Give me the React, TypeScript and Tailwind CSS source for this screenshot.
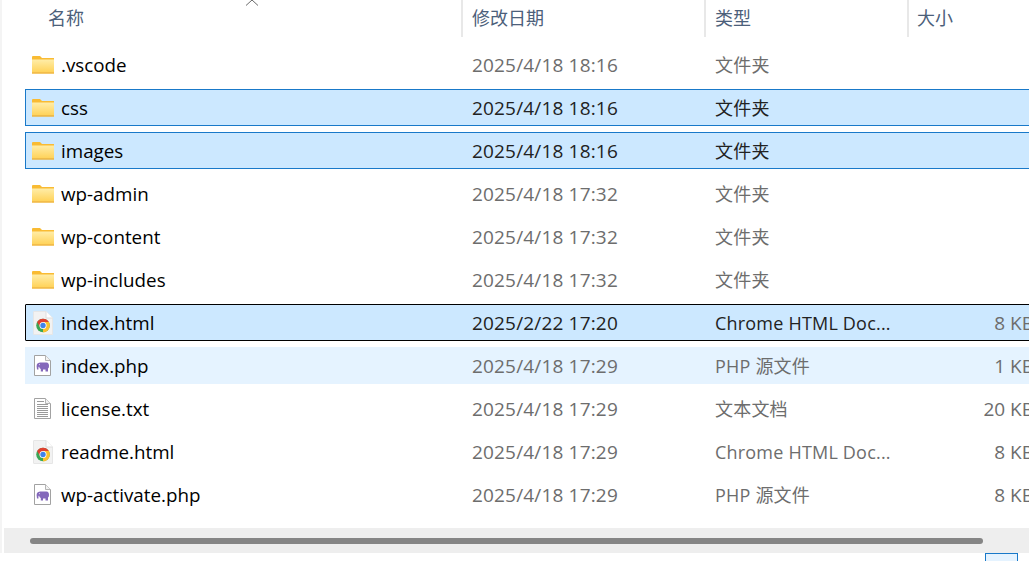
import React from "react";

const CJK = "font-['Open_Sans','Noto_Sans_CJK_SC',sans-serif]";

function Folder() {
  return (
    <svg width="22" height="18" viewBox="0 0 22 18" className="shrink-0">
      <defs>
        <linearGradient id="fg" x1="0" y1="0" x2="0" y2="1">
          <stop offset="0" stopColor="#ffeda8" />
          <stop offset="1" stopColor="#ffd258" />
        </linearGradient>
      </defs>
      <path d="M0 1 Q0 0 1 0 H8 L10 2 H22 V5 H0 Z" fill="#f9bb33" />
      <rect x="0" y="3.5" width="22" height="13" fill="url(#fg)" />
      <rect x="0" y="16.2" width="22" height="1.5" fill="#f0b232" />
    </svg>
  );
}

function DocShape() {
  return (
    <>
      <path d="M.5 .5 H11.5 L16.5 5.5 V20.5 H.5 Z" fill="#fff" stroke="#a2a2a2" />
      <path d="M11.5 .5 V5.5 H16.5" fill="#f2f2f2" stroke="#b5b5b5" />
    </>
  );
}

function ChromeDoc() {
  return (
    <svg width="20" height="24" viewBox="0 0 20 24" className="shrink-0">
      <path d="M1 .5 H13 L19.5 7 V23.5 H1 Q.5 23.5 .5 23 V1 Q.5 .5 1 .5 Z" fill="#f2f2f2" stroke="#e6e6e6" />
      <path d="M13 .5 V7 H19.5" fill="#fff" stroke="#dedede" />
      <g transform="translate(10 14.5)">
        <circle r="6.8" fill="#3aa655" />
        <path d="M0 6.8 A6.8 6.8 0 0 0 5.89 -3.4 L0 -3.4 Z" fill="#fbc02d" />
        <path d="M5.89 -3.4 A6.8 6.8 0 0 0 -5.89 -3.4 L-2.9 1.7 L0 -3.4 Z" fill="#e0402f" />
        <circle r="3.5" fill="#fff" />
        <circle r="2.7" fill="#3f83ea" />
      </g>
    </svg>
  );
}

function PhpDoc() {
  return (
    <svg width="18" height="21" viewBox="0 0 18 21" className="shrink-0">
      <DocShape />
      <g fill="#8468bb">
        <path d="M7 7.5 H12.5 Q15 7.8 15 11 Q15 13 14 13.5 V16.5 H11.5 V14.5 H9 V16.5 H6.8 V14 Q5.5 13.5 5 11.5 Q4 12 4.5 14.5 L3 14.5 Q2 11 3 9 Q4.5 7 7 7.5 Z" />
      </g>
      <circle cx="5.5" cy="9.6" r="0.6" fill="#d8cdee" />
    </svg>
  );
}

function TxtDoc() {
  return (
    <svg width="18" height="21" viewBox="0 0 18 21" className="shrink-0">
      <DocShape />
      <path d="M3 3.5H10M3 6.5H14M3 8.5H14M3 10.5H14M3 12.5H14M3 14.5H14M3 16.5H14M3 18.5H14" stroke="#9a9a9a" strokeWidth="1" />
    </svg>
  );
}

type Row = {
  name: string;
  date: string;
  type: string;
  size?: string;
  icon: "folder" | "chrome" | "php" | "txt";
  state?: "selected" | "focused" | "hover";
};

const rows: Row[] = [
  { name: ".vscode", date: "2025/4/18 18:16", type: "文件夹", icon: "folder" },
  { name: "css", date: "2025/4/18 18:16", type: "文件夹", icon: "folder", state: "selected" },
  { name: "images", date: "2025/4/18 18:16", type: "文件夹", icon: "folder", state: "selected" },
  { name: "wp-admin", date: "2025/4/18 17:32", type: "文件夹", icon: "folder" },
  { name: "wp-content", date: "2025/4/18 17:32", type: "文件夹", icon: "folder" },
  { name: "wp-includes", date: "2025/4/18 17:32", type: "文件夹", icon: "folder" },
  { name: "index.html", date: "2025/2/22 17:20", type: "Chrome HTML Doc...", size: "8 KB", icon: "chrome", state: "focused" },
  { name: "index.php", date: "2025/4/18 17:29", type: "PHP 源文件", size: "1 KB", icon: "php", state: "hover" },
  { name: "license.txt", date: "2025/4/18 17:29", type: "文本文档", size: "20 KB", icon: "txt" },
  { name: "readme.html", date: "2025/4/18 17:29", type: "Chrome HTML Doc...", size: "8 KB", icon: "chrome" },
  { name: "wp-activate.php", date: "2025/4/18 17:29", type: "PHP 源文件", size: "8 KB", icon: "php" },
];

function RowIcon({ icon }: { icon: Row["icon"] }) {
  if (icon === "folder") return <Folder />;
  if (icon === "chrome") return <ChromeDoc />;
  if (icon === "php") return <PhpDoc />;
  return <TxtDoc />;
}

function FileRow({ row }: { row: Row }) {
  const selected = row.state === "selected" || row.state === "focused";
  const box =
    row.state === "selected"
      ? "bg-[#cce8ff] border-[#1979c9]"
      : row.state === "focused"
        ? "bg-[#cce8ff] border-black rounded-l-[1px]"
        : row.state === "hover"
          ? "bg-[#e5f3ff] border-[#e5f3ff]"
          : "border-transparent";
  const tone = selected ? "text-[#222222]" : "text-[#6d6d6d]";
  return (
    <div className={`flex h-[37px] w-[1020px] shrink-0 items-center border pt-[2px] ${box}`}>
      <div className="flex w-[436px] shrink-0 items-center">
        <div className="-mt-[2px] flex w-[34px] shrink-0 justify-center">
          <RowIcon icon={row.icon} />
        </div>
        <span className="ml-[1px] pb-[1px] text-[18.8px] text-black">{row.name}</span>
      </div>
      <div className={`w-[243px] shrink-0 pl-[10px] text-[19px] tracking-[0.17px] ${tone}`}>{row.date}</div>
      <div className={`w-[203px] shrink-0 whitespace-nowrap pl-[10px] tracking-[0.2px] ${tone}`}>{row.type}</div>
      <div className="w-[126px] shrink-0 whitespace-nowrap text-right text-[19px] text-[#6d6d6d]">{row.size}</div>
    </div>
  );
}

export default function App() {
  return (
    <div className={`relative flex h-[561px] w-[1029px] flex-col overflow-hidden bg-white text-[18px] ${CJK}`}>
      <div className="flex min-h-0 flex-1 border-l-2 border-[#f4f4f4]">
        <div className="flex min-w-0 flex-1 flex-col">
          <div className="flex h-[37px] shrink-0 text-[#4c607a]">
            <div className="w-[461px] shrink-0 border-r-2 border-[#e8e8e8] pl-[46px] pt-[5px]">名称</div>
            <div className="w-[243px] shrink-0 border-r-2 border-[#e8e8e8] pl-[9px] pt-[5px]">修改日期</div>
            <div className="w-[203px] shrink-0 border-r-2 border-[#e8e8e8] pl-[9px] pt-[5px]">类型</div>
            <div className="pl-[8px] pt-[5px]">大小</div>
          </div>
          <div className="flex flex-1 flex-col gap-[6px] overflow-hidden pl-[23px] pt-[9px]">
            {rows.map((r) => (
              <FileRow key={r.name} row={r} />
            ))}
          </div>
          <div className="ml-[2px] flex h-[25px] shrink-0 items-center bg-[#eeeeee] pl-[26px]">
            <div className="h-[6px] w-[953px] rounded-full bg-[#858585]" />
          </div>
        </div>
      </div>
      <div className="flex h-[8px] shrink-0 justify-end pr-[11px]">
        <div className="h-[10px] w-[33px] border border-[#1979c9] bg-[#e5f3ff]" />
      </div>
      <svg width="14" height="6" viewBox="0 0 14 6" className="absolute left-[245px] top-0">
        <path d="M1 5.5 L7 0 L13 5.5" fill="none" stroke="#6b6b6b" strokeWidth="1" />
      </svg>
    </div>
  );
}
